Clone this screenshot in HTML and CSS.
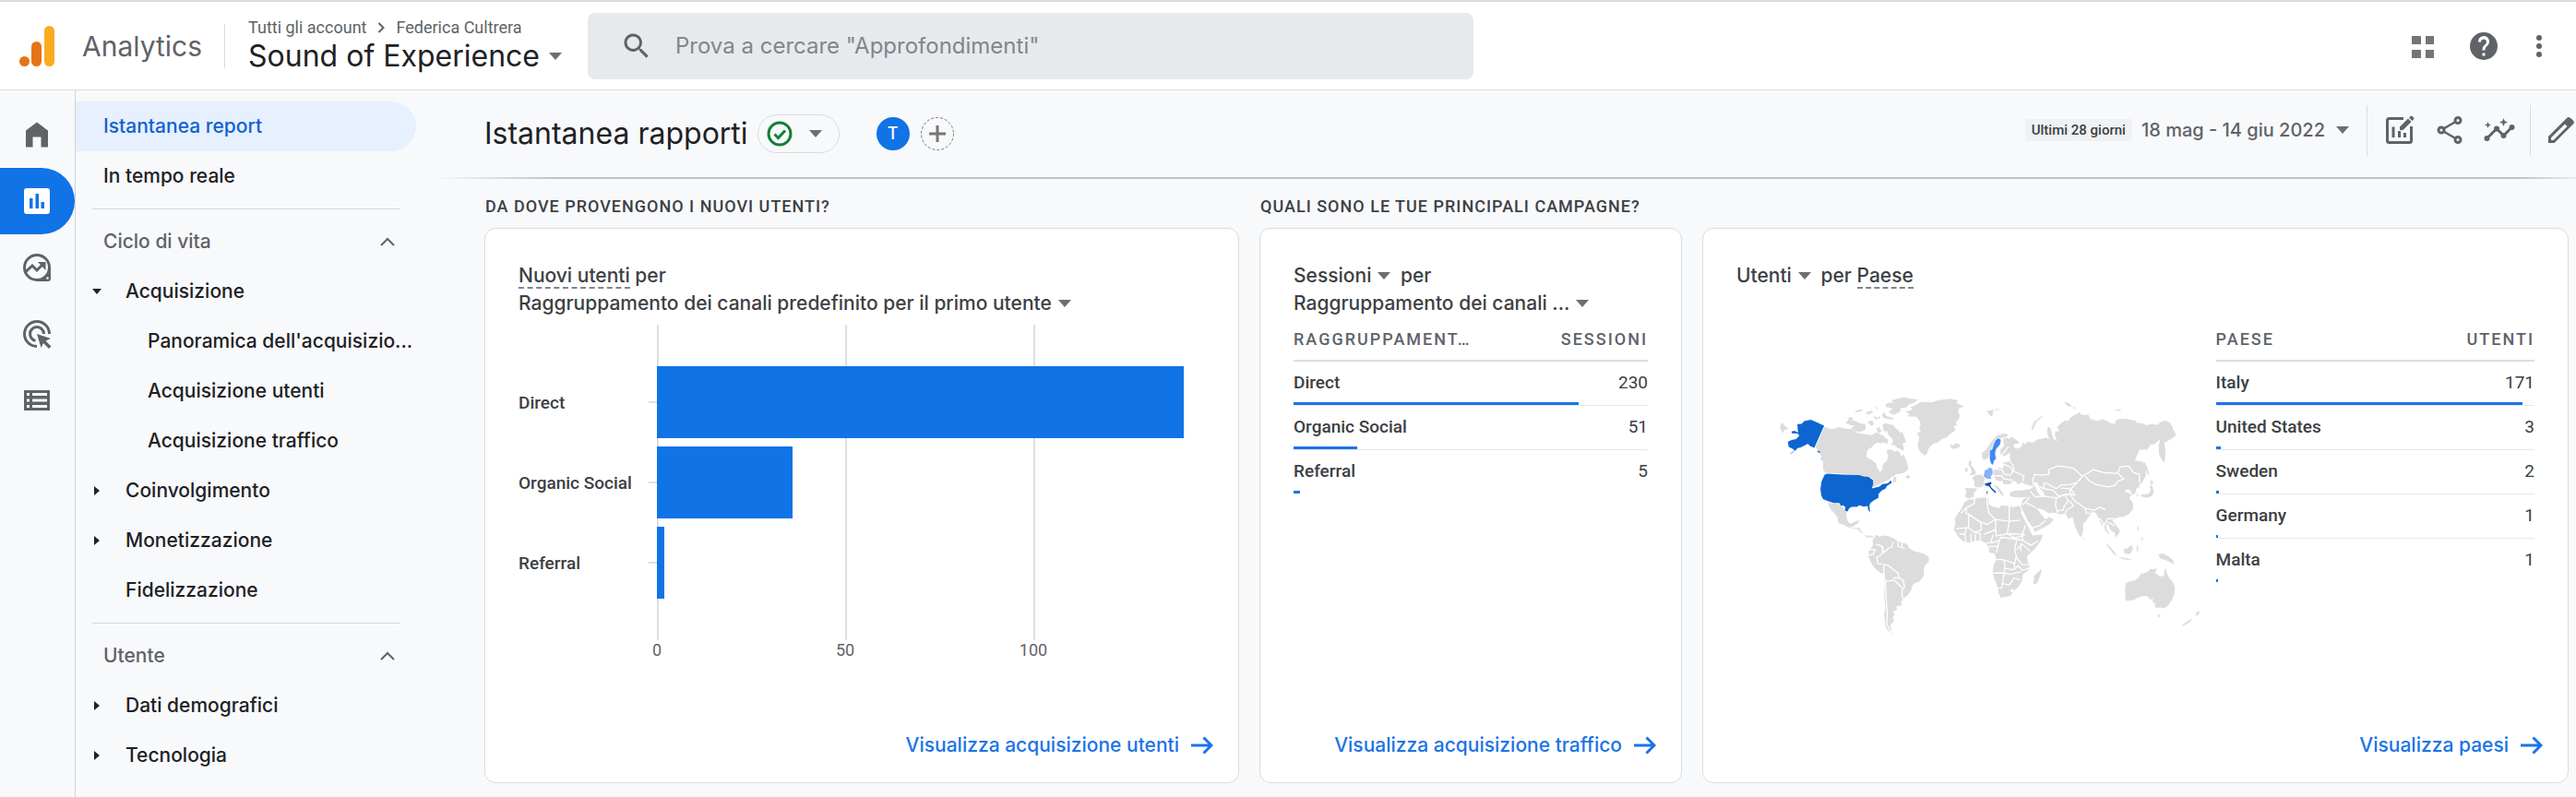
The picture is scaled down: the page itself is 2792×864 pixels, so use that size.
FILE: index.html
```html
<!DOCTYPE html>
<html lang="it">
<head>
<meta charset="utf-8">
<meta name="viewport" content="width=device-width, initial-scale=1">
<title>Analytics | Istantanea rapporti</title>
<link rel="stylesheet" href="styles.css">
</head>
<body>
<div class="app">
  <header class="topbar">
    <a class="brand" href="#">
      <svg class="brand-logo" viewBox="0 0 38 44" aria-hidden="true"><rect x="27" width="11" height="44" rx="5.5" fill="#fbab23"/><rect x="13" y="17" width="11" height="27" rx="5.5" fill="#e77317"/><circle cx="5.5" cy="38.5" r="5.5" fill="#e77317"/></svg>
      <span class="brand-name">Analytics</span>
    </a>
    <div class="account">
      <div class="crumbs"><span>Tutti gli account</span><svg class="crumb-sep" viewBox="0 0 8 12" aria-hidden="true"><path d="M1.5 1l5 5-5 5"/></svg><span>Federica Cultrera</span></div>
      <button class="property" type="button">Sound of Experience<i class="caret"></i></button>
    </div>
    <label class="search">
      <svg class="icon" viewBox="0 0 24 24" aria-hidden="true"><path d="M15.5 14h-.8l-.3-.3A6.5 6.500 0 1 0 13.700 14.400l.3.3v.8l5 5 1.500-1.500zm-6 0a4.500 4.500 0 1 1 0-9 4.500 4.500 0 0 1 0 9z"/></svg>
      <input class="search-input" type="search" aria-label="Cerca" placeholder="Prova a cercare &quot;Approfondimenti&quot;">
    </label>
    <div class="top-actions">
      <button class="icon-btn" type="button" aria-label="App"><svg class="icon" viewBox="0 0 36 36"><path fill="#757575" d="M6 7h10v9H6zM21 7h9v9h-9zM6 22h10v9H6zM21 22h9v9h-9z"/></svg></button>
      <button class="icon-btn" type="button" aria-label="Guida"><svg class="icon" viewBox="0 0 24 24"><path d="M12 2a10 10 0 1 0 0 20 10 10 0 0 0 0-20zm1 17h-2v-2h2zm2.100-7.800-.9.900C13.400 12.900 13 13.500 13 15h-2v-.5c0-1.100.4-2.100 1.200-2.800l1.200-1.300A2 2 0 1 0 10 9H8a4 4 0 1 1 7.100 2.200z"/></svg></button>
      <button class="icon-btn" type="button" aria-label="Altro"><svg class="icon icon-narrow" viewBox="4 0 16 24"><circle cx="12" cy="6" r="2"/><circle cx="12" cy="12" r="2"/><circle cx="12" cy="18" r="2"/></svg></button>
    </div>
  </header>

  <div class="body">
    <nav class="rail" aria-label="Sezioni">
      <a class="rail-item" href="#" aria-label="Home"><svg class="icon" viewBox="0 0 36 36"><path d="M6 13.500 18 4.500l12 9v18h-7.500v-11h-9v11H6z"/></svg></a>
      <a class="rail-item is-active" href="#" aria-label="Report"><svg class="icon" viewBox="0 0 36 36"><path fill-rule="evenodd" d="M7 4h22a3 3 0 0 1 3 3v22a3 3 0 0 1-3 3H7a3 3 0 0 1-3-3V7a3 3 0 0 1 3-3zm3 11v11h3.500V15zm6.500-5v16H20V10zm6 9v7H26v-7z"/></svg></a>
      <a class="rail-item" href="#" aria-label="Esplora"><svg class="icon" viewBox="0 0 36 36"><path d="M18 3a15 15 0 1 0 0 30h12a3 3 0 0 0 3-3V18A15 15 0 0 0 18 3zm0 3a12 12 0 1 1 0 24 12 12 0 0 1 0-24z" fill-rule="evenodd"/><path d="M5.500 23l7.500-7 5 5 8-8" fill="none" stroke="#5f6368" stroke-width="3"/><path d="M19 12h8.500v9z"/><circle cx="29.500" cy="29.500" r="1.200" fill="#fff"/></svg></a>
      <a class="rail-item" href="#" aria-label="Pubblicità"><svg class="icon" viewBox="0 0 36 36"><g fill="none" stroke="#5f6368" stroke-width="3"><path d="M31.500 18A13.500 13.500 0 1 0 18 31.500"/><path d="M25.500 18a7.500 7.500 0 1 0-9 7.400"/></g><path d="M18 18l15 5-5.500 2.500 6 6-2.500 2.500-6-6L22.500 33z"/></svg></a>
      <a class="rail-item" href="#" aria-label="Configura"><svg class="icon" viewBox="0 0 36 36"><path fill-rule="evenodd" d="M4 7h28v22H4zm3 3v3h3v-3zm6 0v3h16v-3zm-6 6.500v3h3v-3zm6 0v3h16v-3zM7 23v3h3v-3zm6 0v3h16v-3z"/></svg></a>
    </nav>

    <nav class="menu" aria-label="Report">
      <a class="menu-item is-active" href="#">Istantanea report</a>
      <a class="menu-item" href="#">In tempo reale</a>
      <hr class="menu-rule">
      <button class="menu-item menu-head" type="button">Ciclo di vita<svg class="chevron" viewBox="0 0 16 10" aria-hidden="true"><path d="M1 9l7-7 7 7"/></svg></button>
      <a class="menu-item lvl-1" href="#"><i class="tri tri-down"></i>Acquisizione</a>
      <a class="menu-item lvl-2" href="#">Panoramica dell'acquisizio...</a>
      <a class="menu-item lvl-2" href="#">Acquisizione utenti</a>
      <a class="menu-item lvl-2" href="#">Acquisizione traffico</a>
      <a class="menu-item lvl-1" href="#"><i class="tri tri-right"></i>Coinvolgimento</a>
      <a class="menu-item lvl-1" href="#"><i class="tri tri-right"></i>Monetizzazione</a>
      <a class="menu-item lvl-1" href="#"><i class="tri"></i>Fidelizzazione</a>
      <hr class="menu-rule">
      <button class="menu-item menu-head" type="button">Utente<svg class="chevron" viewBox="0 0 16 10" aria-hidden="true"><path d="M1 9l7-7 7 7"/></svg></button>
      <a class="menu-item lvl-1" href="#"><i class="tri tri-right"></i>Dati demografici</a>
      <a class="menu-item lvl-1" href="#"><i class="tri tri-right"></i>Tecnologia</a>
    </nav>

    <main class="main">
      <div class="titlebar">
        <h1 class="title">Istantanea rapporti</h1>
        <button class="status" type="button" aria-label="Stato"><svg class="status-icon" viewBox="0 0 28 28"><circle cx="14" cy="14" r="12"/><path d="M8.500 14.500l4 4 7.500-8"/></svg><i class="caret"></i></button>
        <button class="avatar" type="button">T</button>
        <button class="add" type="button" aria-label="Aggiungi"><svg viewBox="0 0 36 36"><circle cx="18" cy="18" r="17.500"/><path d="M18 9v18M9 18h18"/></svg></button>
        <div class="tools">
          <span class="range-tag">Ultimi 28 giorni</span>
          <button class="range" type="button">18 mag - 14 giu 2022<i class="caret"></i></button>
          <div class="tool-group">
            <button class="icon-btn" type="button" aria-label="Personalizza"><svg class="icon" viewBox="0 0 36 36"><path d="M22 5.500H6.500a2 2 0 0 0-2 2v22a2 2 0 0 0 2 2h22a2 2 0 0 0 2-2V14" fill="none" stroke="#5f6368" stroke-width="3"/><path d="M9.500 14.500h3V26h-3zM16 19h3v7h-3zM22 21h3v5h-3zM18 18v-3.500L27 5.500 30.500 9l-9 9zM28 4.500l1.500-1.500a1.500 1.500 0 0 1 2 0L33 4.500a1.500 1.500 0 0 1 0 2L31.500 8z"/></svg></button>
            <button class="icon-btn" type="button" aria-label="Condividi"><svg class="icon" viewBox="0 0 36 36"><path d="M27 7.500L9 18l18 10.500" fill="none" stroke="#5f6368" stroke-width="2.500"/><g fill="#f8f9fb" stroke="#5f6368" stroke-width="3"><circle cx="27" cy="7.500" r="3"/><circle cx="9" cy="18" r="3"/><circle cx="27" cy="28.500" r="3"/></g></svg></button>
            <button class="icon-btn" type="button" aria-label="Approfondimenti"><svg class="icon" viewBox="0 0 36 36"><path d="M4.500 27L15 16.500l7.500 7.500 9-9" fill="none" stroke="#5f6368" stroke-width="3"/><circle cx="4.500" cy="27" r="3"/><circle cx="15" cy="16.500" r="3"/><circle cx="22.500" cy="24" r="3"/><circle cx="31.500" cy="15" r="3"/><path d="M22.500 5l1.300 3.200L27 9.500l-3.200 1.300-1.300 3.200-1.300-3.200L18 9.500l3.200-1.300zM5.500 9l1 2.500L9 12.500l-2.500 1-1 2.500-1-2.500-2.500-1 2.500-1z"/></svg></button>
          </div>
          <div class="tool-group tool-group-last">
            <button class="icon-btn" type="button" aria-label="Modifica"><svg class="icon" viewBox="0 0 36 36"><path fill-rule="evenodd" d="M6 32v-7L24.500 6.500l2-2a3 3 0 0 1 3 0L33 7.500a3 3 0 0 1 0 4l-2 2L12.500 32zM9 26.200V29h2.500L26.500 14 24 11.500z"/></svg></button>
          </div>
        </div>
      </div>

      <div class="cards">
        <section class="card-col">
          <h2 class="label">DA DOVE PROVENGONO I NUOVI UTENTI?</h2>
          <article class="card">
            <h3 class="card-title"><span><span class="dashed">Nuovi utenti</span> per</span><button class="pick" type="button">Raggruppamento dei canali predefinito per il primo utente<i class="caret"></i></button></h3>
            <div class="chart">
              <div class="chart-names"><span>Direct</span><span>Organic Social</span><span>Referral</span></div>
              <div class="plot">
                <div class="bars">
                  <div class="bar-row"><div class="bar" style="width:96.200%"></div></div>
                  <div class="bar-row"><div class="bar" style="width:24.800%"></div></div>
                  <div class="bar-row"><div class="bar" style="width:1.400%"></div></div>
                </div>
                <div class="axis"><span>0</span><span>50</span><span>100</span></div>
              </div>
            </div>
            <a class="more" href="#">Visualizza acquisizione utenti<svg class="arrow" viewBox="0 0 24 20" aria-hidden="true"><path d="M0 10h22M13.500 1.500L22 10l-8.500 8.500"/></svg></a>
          </article>
        </section>

        <section class="card-col">
          <h2 class="label">QUALI SONO LE TUE PRINCIPALI CAMPAGNE?</h2>
          <article class="card">
            <h3 class="card-title"><span><button class="pick pick-inline" type="button">Sessioni<i class="caret"></i></button> per</span><button class="pick" type="button">Raggruppamento dei canali ...<i class="caret"></i></button></h3>
            <table class="data">
              <thead><tr><th>RAGGRUPPAMENT…</th><th>SESSIONI</th></tr></thead>
              <tbody>
                <tr><td>Direct<i class="meter" style="width:80.400%"></i></td><td>230</td></tr>
                <tr><td>Organic Social<i class="meter" style="width:17.900%"></i></td><td>51</td></tr>
                <tr><td>Referral<i class="meter" style="width:1.800%"></i></td><td>5</td></tr>
              </tbody>
            </table>
            <a class="more" href="#">Visualizza acquisizione traffico<svg class="arrow" viewBox="0 0 24 20" aria-hidden="true"><path d="M0 10h22M13.500 1.500L22 10l-8.500 8.500"/></svg></a>
          </article>
        </section>

        <section class="card-col">
          <article class="card">
            <h3 class="card-title"><span><button class="pick pick-inline" type="button">Utenti<i class="caret"></i></button> per <span class="dashed">Paese</span></span></h3>
            <div class="geo">
              <svg class="map" viewBox="-54 0 1557 840" role="img" aria-label="Utenti per Paese">
                <g class="land">
                  <path d="M233 130L248 137 262 138 280 132 300 137 320 138 330 146 345 152 362 154 380 158 392 154 400 148 412 156 425 160 432 172 424 180 415 185 403 182 392 190 385 198 374 204 370 212 368 228 376 234 385 238 400 250 402 262 406 268 412 278 420 270 422 252 434 242 440 225 434 214 436 205 450 205 460 212 470 208 476 214 480 225 490 222 496 236 500 245 502 258 505 268 490 280 476 284 465 285 456 292 448 295 440 304 430 308 416 314 400 322 385 328 392 305 385 297 375 296 350 288 295 283 235 280 228 270 226 235 215 212 203 197Z"/>
                  <path d="M420 125L428 118 440 122 455 125 462 134 470 140 480 152 484 146 492 165 497 182 485 185 490 198 488 210 476 202 470 200 460 190 450 190 455 175 450 166 440 158 436 146 425 145Z"/>
                  <path d="M300 118L308 110 312 100 324 100 322 110 335 112 345 118 365 123 366 140 350 146 332 146 318 135 330 128 314 124Z"/>
                  <path d="M450 45L470 40 490 35 512 40 535 42 525 52 505 60 498 68 480 70 478 80 466 88 455 92 440 82 455 72 430 66 432 56 445 52 460 56 452 50Z"/>
                  <path d="M330 80l20-6 8 4-22 6zM365 84l20-6 6 6-16 8zM398 64l8 8-4 2zM372 116l14-6 8 12-10 6zM390 94l14 8 6-6 4 6-16 6zM418 92l10-8 4 12 24 6-4 6-28-6zM400 138l10-8 8 16-10 6zM425 166l14 6-2 14-16-4zM494 292l12-4 4 8-8 4zM456 294l8 0 2 14-12 6zM87 130l8-14 6 10 14 10-14 6-4 10-6-10z"/>
                  <path d="M495 82L520 75 510 68 530 60 545 50 580 52 600 45 640 40 665 45 660 54 685 64 668 72 666 84 672 92 668 108 658 116 662 126 652 130 658 142 640 154 630 165 614 170 600 182 586 186 575 195 568 206 566 216 558 225 545 215 538 204 535 190 540 165 532 150 545 146 540 134 544 122 540 110 530 98 500 97 510 90Z"/>
                  <path d="M640 188l10 4 6-6 12 1 3 6-8 6-12 4-8-4z"/>
                  <path d="M243 378L262 380 280 382 290 392 303 408 303 420 306 432 310 442 318 446 332 438 346 434 340 445 325 455 310 458 296 450 280 445 274 436 276 428 262 408 254 390 262 412 250 396Z"/>
                  <path d="M312 458l20 1 14 0 4 10 8 8-8-2-12-12-16-2zM360 482l12 3 14 0 8 6-14-2-10 2z"/>
                  <path d="M400 482L412 488 425 484 440 486 455 492 470 502 480 506 500 512 505 524 520 534 545 540 560 546 572 556 570 570 560 580 555 590 555 606 552 620 540 634 526 638 518 645 515 658 508 670 498 682 488 690 480 700 484 710 465 715 468 724 455 732 460 742 454 750 458 762 448 772 446 780 452 790 442 792 455 804 440 795 430 780 428 760 426 740 430 720 426 680 428 640 425 610 412 604 400 595 392 586 385 575 374 552 376 535 390 515 388 500Z"/>
                </g>
                <path class="edge" d="M420 577L405 575 402 555 416 548 422 530 416 518 400 512M425 577V612L430 630 432 680 436 740 434 770 446 795M425 578L440 582 452 592 470 605 475 622 488 630 492 652 484 660 484 684 500 690M432 632L455 630 460 620 475 622M460 630L475 645 485 655M420 518L424 540 440 525 452 520 455 505M470 502L472 520 495 526M484 506V524M375 548L390 545 396 530 380 530"/>
                <g class="us">
                  <path d="M144 122L158 121 166 112 188 108 205 115 231 127 199 199 185 193 178 186 170 190 155 198 145 200 136 210 130 203 116 196 113 180 125 174 140 171 150 160 146 153 126 152 125 146 135 144 146 150Z"/>
                  <path d="M240 283L292 286 345 288 360 292 375 294 390 304 390 318 386 331 410 325 422 316 430 316 440 313 447 305 451 312 444 318 436 322 430 332 418 338 408 348 407 362 392 370 380 380 378 388 380 410 374 400 372 388 360 390 345 386 336 392 330 390 318 392 312 396 306 407 298 402 300 392 292 386 286 388 280 378 262 378 248 374 228 366 222 355 219 335 222 310 232 287Z"/>
                  <path d="M208 208l8 2 2 6-6-2zM222 230l2 8-3-2zM136 209l-8 6-12 5 12-7z"/>
                </g>
                <g transform="translate(600 0)">
                  <g class="land">
                    <path d="M233 215L228 195 222 165 232 170 240 163 262 178 265 185 250 186 245 194 256 202 268 198 275 192 275 182 285 188 290 180 310 182 322 172 335 170 350 166 362 170 355 150 356 132 366 134 370 150 376 170 388 178 380 158 382 145 396 146 388 132 398 122 412 110 425 112 430 102 445 92 460 84 468 92 490 92 495 105 520 112 535 106 550 112 560 118 575 122 578 110 590 105 615 106 640 110 648 118 665 120 680 126 690 122 715 124 722 116 740 110 755 118 762 130 765 140 775 158 762 168 750 175 735 183 738 198 740 215 736 248 726 235 718 218 718 190 722 172 712 178 705 187 692 188 680 205 655 205 648 222 640 240 668 245 676 265 675 290 666 310 655 318 655 326 645 332 640 350 630 350 625 336 612 335 606 342 620 345 630 352 622 362 634 380 634 398 620 415 600 425 590 424 575 430 566 434 580 452 592 468 586 482 575 490 576 476 562 468 556 452 548 446 548 462 560 482 545 470 538 450 532 452 524 430 512 408 500 410 492 422 480 438 472 446 472 468 466 490 458 480 446 456 438 424 424 430 414 412 396 416 380 410 360 412 342 400 320 394 338 418 350 432 362 424 376 432 366 446 345 458 315 472 308 458 292 436 280 410 270 388 278 365 300 358 270 361 236 357 234 345 250 338 300 334 312 325 285 318 270 310 262 320 250 306 232 318 215 318 208 310 190 304 180 290 182 268 200 264 212 266 214 252 208 248 222 246 236 240Z"/>
                    <path d="M145 236L144 216 158 204 172 182 190 160 215 152 230 156 222 165 206 168 190 170 176 196 170 210 166 230 154 238Z"/>
                    <path d="M205 222L203 206 216 192 212 170 222 168 230 196 236 210 228 220 214 226Z"/>
                    <path d="M112 296L124 288 140 286 152 298 150 320 140 328 120 326 118 306ZM90 330L128 331 118 346 116 358 100 364 88 358 92 344ZM102 240l8 4-2 12 10 10 6 12-4 10-18 0 8-8-2-12-8-14zM88 268l8-6 2 12-8 4zM180 320l14 4 12 14 10 18-10-4-14-20zM43 190l10 2 8-6 12 2-2 8-12 6-10-2z"/>
                    <path d="M98 368L118 366 130 362 160 360 166 368 164 382 180 390 200 395 206 386 225 388 245 392 265 388 272 400 270 410 280 430 290 448 300 470 308 484 342 481 336 498 322 520 304 538 290 552 292 566 298 582 294 598 276 610 273 632 262 650 250 662 235 680 205 686 198 672 194 650 186 630 178 605 182 580 190 562 184 542 168 540 166 524 156 508 138 500 120 503 100 507 84 503 70 492 62 480 52 465 57 445 55 430 64 414 75 400 85 378Z"/>
                    <path d="M310 642L314 614 326 602 338 592 334 612 322 640ZM610 640L625 632 640 630 652 622 660 608 672 606 685 600 690 592 700 594 712 590 706 606 718 614 728 618 735 612 736 596 741 590 744 606 752 622 762 634 770 652 769 672 760 694 748 712 736 720 720 718 708 720 704 702 696 700 700 690 690 692 680 680 664 682 648 687 636 694 610 697 608 665Z"/>
                    <path d="M714 742l10 0-6 10zM792 776l20-14 16-10-8 12-22 14zM836 744l8-14 8 2-8 12zM543 508l12 8 16 18 12 18-12-8-16-20zM602 530l14-4 14-12 4 12-8 18-18 0zM646 514l6 12-6 14zM585 554l30 4 20 6-30-2zM716 546l14-4 20 10 14 12 4 14-18-10-28-10zM470 488l6 4 0 8zM648 448l6 14-4 10zM662 488l6 8-6 4zM644 344l8 10-4 4zM656 354l14-4 14-2 8-12-4-14 8 0 6 20-6 14-20 6zM690 302l12 10-10 8zM672 244l8 20 8 26-8-8-10-30z"/>
                    <path d="M303 142l8-26 24-18 8-2-22 18-12 26zM158 80l24-4-6 22-10-8zM184 74l18-2-10 6zM408 50l18 4 10 12-14-2zM572 76l26-2-10 6zM440 66l10 4-8 2z"/>
                  </g>
                  <path class="edge" d="M233 215L230 238 244 256 248 276 280 290 276 308M230 195L206 226M214 252L236 262 244 276 236 288 214 284 210 268M182 268L210 270M176 290L208 290 214 300 240 304 250 318M208 305V320M313 325L308 305 315 285 340 288 362 285 360 270 390 258 440 265 470 292 452 312 430 318 400 320 385 332 360 318 345 312V332L330 325M345 332L372 336 395 358 412 350 445 352 432 332 400 330M455 310L430 335 430 350 445 372 480 396 510 402 525 392 545 400M300 340L316 358 345 356 385 362 412 352 425 372 412 385 408 400 388 405M385 362L382 385 390 412M275 385L300 360M288 378L320 394M430 372L440 388 420 400 414 412M470 290L490 280 505 270 540 280 585 282 604 300 585 308 575 322 550 326 512 318 490 305 478 290M585 282L592 262 620 258 636 280 655 285 655 312M500 405L506 425 528 430 540 452 552 430 575 428M552 440L575 452M478 398L482 410 498 414M305 460L330 452 350 435"/>
                  <path class="edge" d="M120 366L118 380 92 395 75 412M92 395V412L138 440 160 448 188 432 232 438 268 434M138 440L100 414V458L60 462M160 362L160 382 166 412 188 432M232 388V438M188 432V465L150 480M232 440L226 478 250 492 285 482M140 440L142 466 118 474 100 458M118 474L138 478 138 500M92 462L88 480 70 478M108 478V505M122 480V504M88 482L92 504M180 482L172 505 158 510M188 465L190 485 226 478 280 480M285 450L275 480 276 500 302 516 326 502M172 508L200 500 205 490 255 496 276 500M200 500L190 540M166 520L195 518M180 562L212 562 218 580 216 606 180 606M212 562L250 575 255 552 250 530 256 500M256 530L274 512 300 536M256 555L275 580 295 578M216 590L244 596 262 582 275 598 296 590M216 606L210 640 206 655 194 656M210 640L232 645 248 622 266 628M216 606L236 610 256 605 270 602M270 508V535M248 575L250 590"/>
                  <path fill="#fff" d="M234 664l8-8 8 8-8 6zM312 312l12 0 4 14 16 18 4 10-14 2-12-16zM238 318l14-4 14 10 26 2-8 10-28 2-16-2z"/>
                  <path fill="#3f87f5" stroke="#fff" stroke-width="2" d="M180 190L186 176 196 167 206 172 203 188 190 204 187 218 190 236 184 240 180 256 172 250 168 236 168 208 176 204Z"/>
                  <path fill="#84b1f7" stroke="#fff" stroke-width="2" d="M152 272L162 268 166 262 178 266 180 282 174 290 174 302 158 300 148 292Z"/>
                  <path fill="#0b4fb0" d="M152 316L162 313 174 310 174 316 170 319 174 328 190 342 186 344 176 336 166 324 156 322zM159 340h3v8h-3zM180 342h8v4z"/>
                </g>
              </svg>
              <table class="data">
                <thead><tr><th>PAESE</th><th>UTENTI</th></tr></thead>
                <tbody>
                  <tr><td>Italy<i class="meter" style="width:96.100%"></i></td><td>171</td></tr>
                  <tr><td>United States<i class="meter" style="width:1.700%"></i></td><td>3</td></tr>
                  <tr><td>Sweden<i class="meter" style="width:1.100%"></i></td><td>2</td></tr>
                  <tr><td>Germany<i class="meter" style="width:.6%"></i></td><td>1</td></tr>
                  <tr><td>Malta<i class="meter" style="width:.6%"></i></td><td>1</td></tr>
                </tbody>
              </table>
            </div>
            <a class="more" href="#">Visualizza paesi<svg class="arrow" viewBox="0 0 24 20" aria-hidden="true"><path d="M0 10h22M13.500 1.500L22 10l-8.500 8.500"/></svg></a>
          </article>
        </section>
      </div>
    </main>
  </div>
</div>
</body>
</html>
```
FILE: styles.css
```css
:root {
  --sans: Inter, "Liberation Sans", sans-serif;
  --data: Roboto, "Liberation Sans", sans-serif;
  --ink: #202124;
  --ink-2: #3c4043;
  --ink-3: #5f6368;
  --line: #dadce0;
  --blue: #1073e6;
  --bg: #f8f9fb;
}
* { box-sizing: border-box; }
body { margin: 0; background: var(--bg); color: var(--ink); font: 500 21px/30px var(--sans); }
button { border: 0; padding: 0; background: none; font: inherit; color: inherit; cursor: pointer; }
a { color: inherit; text-decoration: none; }
h1, h2, h3 { margin: 0; font: inherit; }
.app { min-height: 100vh; display: flex; flex-direction: column; border-top: 2px solid #dcdcdc; }
.icon { width: 36px; height: 36px; display: block; fill: var(--ink-3); }
.icon-narrow { width: 24px; }
.icon-btn { flex: none; }
.caret { display: inline-block; flex: none; border: 7px solid transparent; border-top: 8px solid #6b6e72; border-bottom: 0; }

/* Top bar */
.topbar { height: 96px; display: flex; align-items: center; background: #fff; border-bottom: 1px solid var(--line); padding: 0 28px 0 21px; }
.brand { display: flex; align-items: center; gap: 30px; height: 48px; padding-right: 24px; border-right: 1px solid var(--line); color: var(--ink-3); }
.brand-logo { width: 38px; height: 44px; }
.brand-name { font-size: 30px; font-weight: 400; }
.account { padding-left: 25px; display: flex; flex-direction: column; align-items: flex-start; }
.crumbs { display: flex; align-items: center; gap: 12px; font: 400 18px/22px var(--data); color: var(--ink-3); }
.crumb-sep { width: 8px; height: 12px; fill: none; stroke: var(--ink-3); stroke-width: 2; }
.property { display: flex; align-items: center; gap: 10px; font-size: 32px; font-weight: 400; line-height: 40px; }
.search { display: flex; align-items: center; gap: 24px; width: 960px; height: 72px; margin-left: 28px; padding: 0 35px; background: #e6eaed; border-radius: 8px; }
.search-input { flex: 1; min-width: 0; border: 0; padding: 0; background: none; font: 400 24px/30px var(--sans); color: var(--ink-2); outline: 0; }
.search-input::placeholder { color: #80868b; opacity: 1; }
.top-actions { display: flex; gap: 30px; margin-left: auto; }

/* Layout */
.body { flex: 1; display: flex; }
.rail { flex: none; width: 82px; padding-top: 12px; border-right: 1px solid #cfd2d5; }
.rail-item { display: flex; align-items: center; height: 72px; padding-left: 22px; }
.rail-item.is-active { background: var(--blue); border-radius: 0 36px 36px 0; }
.is-active .icon { fill: #fff; }
.menu { flex: none; width: 369px; padding-top: 12px; }
.menu-item { display: flex; align-items: center; width: 100%; height: 54px; padding-left: 30px; }
.menu-item.is-active { background: #e6f0fe; color: #1062cf; border-radius: 0 27px 27px 0; }
.menu-head { justify-content: space-between; padding-right: 23px; color: var(--ink-3); }
.menu-item.lvl-1 { padding-left: 18px; }
.menu-item.lvl-2 { padding-left: 78px; }
.menu-rule { height: 1px; margin: 8px 18px; border: 0; background: #d3d6da; }
.chevron { width: 16px; height: 10px; fill: none; stroke: var(--ink-3); stroke-width: 2; }
.tri { width: 36px; flex: none; display: flex; }
.tri::before { content: ""; }
.tri-down::before { border: 5px solid transparent; border-top: 6px solid var(--ink); border-bottom: 0; }
.tri-right::before { margin-left: 2px; border: 5px solid transparent; border-left: 6px solid var(--ink); border-right: 0; }

/* Title bar */
.main { flex: 1; min-width: 0; padding: 0 8px 15px 74px; }
.titlebar { display: flex; align-items: center; height: 96px; margin: 0 -8px 0 -54px; padding-left: 54px; border-style: solid; border-width: 0 0 2px; border-image: linear-gradient(90deg, transparent, #c0c3c7 130px, #c0c3c7 calc(100% - 60px), #eceef0) 1; }
.title { font-size: 32px; font-weight: 400; line-height: 40px; }
.status { display: flex; align-items: center; gap: 18px; height: 42px; margin-left: 10px; padding: 0 18px 0 9px; border: 1px solid var(--line); border-radius: 21px; }
.status-icon { width: 28px; height: 28px; fill: none; stroke: #128039; stroke-width: 3; }
.avatar { width: 36px; height: 36px; margin-left: 40px; border-radius: 50%; background: var(--blue); color: #fff; font-size: 18px; }
.add { width: 36px; height: 36px; margin-left: 12px; }
.add svg { display: block; fill: none; stroke: #777; stroke-width: 3; }
.add circle { stroke-width: 1; stroke-dasharray: 3 2; }
.tools { display: flex; align-items: center; margin-left: auto; padding-bottom: 8px; color: var(--ink-3); }
.range-tag { padding: 0 7px; background: #eff2f4; color: var(--ink-2); font: 500 15px/24px var(--data); }
.range { display: flex; align-items: center; gap: 12px; margin: 0 19px 0 10px; font-size: 20px; }
.tool-group { display: flex; align-items: center; gap: 18px; height: 55px; padding: 0 15px 0 17px; border-left: 1px solid var(--line); }
.tool-group-last { padding: 0 0 0 13px; }

/* Cards */
.cards { display: grid; grid-template-columns: 818fr 458fr 939fr; gap: 22px; }
.card-col { display: flex; flex-direction: column; justify-content: flex-end; }
.label { padding: 19px 1px 12px; font: 500 18px/22px var(--data); letter-spacing: 1px; color: var(--ink-2); white-space: nowrap; }
.card { display: flex; flex-direction: column; height: 602px; padding: 36px; background: #fff; border: 1px solid var(--line); border-radius: 12px; color: var(--ink-2); }
.card-title { display: flex; flex-direction: column; align-items: flex-start; white-space: nowrap; }
.dashed { border-bottom: 2px dashed #80868b; }
.pick { display: inline-flex; align-items: center; gap: 7px; }
.pick-inline { margin-right: 5px; }
.more { display: flex; align-items: center; justify-content: flex-end; gap: 13px; margin: auto -9px -11px 0; color: #1a73e8; white-space: nowrap; }
.arrow { width: 24px; height: 20px; fill: none; stroke: #1a73e8; stroke-width: 3; }

/* Bar chart */
.chart { display: grid; grid-template-columns: 150px 1fr; margin-top: 8px; font: 500 19px/24px var(--data); }
.chart-names { display: grid; grid-template-rows: repeat(3, 87px); align-items: center; padding-top: 41px; }
.bars { height: 342px; padding-top: 45px; display: grid; grid-template-rows: repeat(3, 78px); gap: 9px; background: repeating-linear-gradient(90deg, #dfdfdf 0 2px, transparent 2px 204px); }
.bar-row { position: relative; }
.bar-row::before { content: ""; position: absolute; left: -9px; top: 38px; width: 9px; height: 2px; background: #dfdfdf; }
.bar { height: 78px; background: var(--blue); }
.axis { display: grid; grid-template-columns: repeat(3, 204px); margin-left: -102px; text-align: center; font: 400 18px/22px var(--data); color: var(--ink-3); }

/* Tables */
.data { width: 100%; border-collapse: collapse; font: 500 19px/24px var(--data); }
.card-title + .data { margin-top: 2px; }
.data th { height: 45px; padding: 0; border-bottom: 2px solid #dcdee1; text-align: left; font: 500 18px/22px var(--data); letter-spacing: 2px; color: var(--ink-3); }
.data tr { position: relative; }
.data td { height: 48px; padding: 0 0 1px; border-bottom: 1px solid #e6e8ea; }
.data tr:last-child td { border-bottom-color: transparent; }
.data td:last-child, .data th:last-child { text-align: right; }
.data td:last-child { font-weight: 400; }
.meter { position: absolute; left: 0; bottom: 0; height: 3px; background: #1a73e8; }

/* Map */
.geo { display: grid; grid-template-columns: 519fr 345fr; align-items: start; margin-top: 32px; }
.map { width: 100%; display: block; margin-top: 73px; }
.land { fill: #dcdcdc; }
.edge { fill: none; stroke: #fff; stroke-width: 4; }
.us { fill: #0d66d0; }
```
